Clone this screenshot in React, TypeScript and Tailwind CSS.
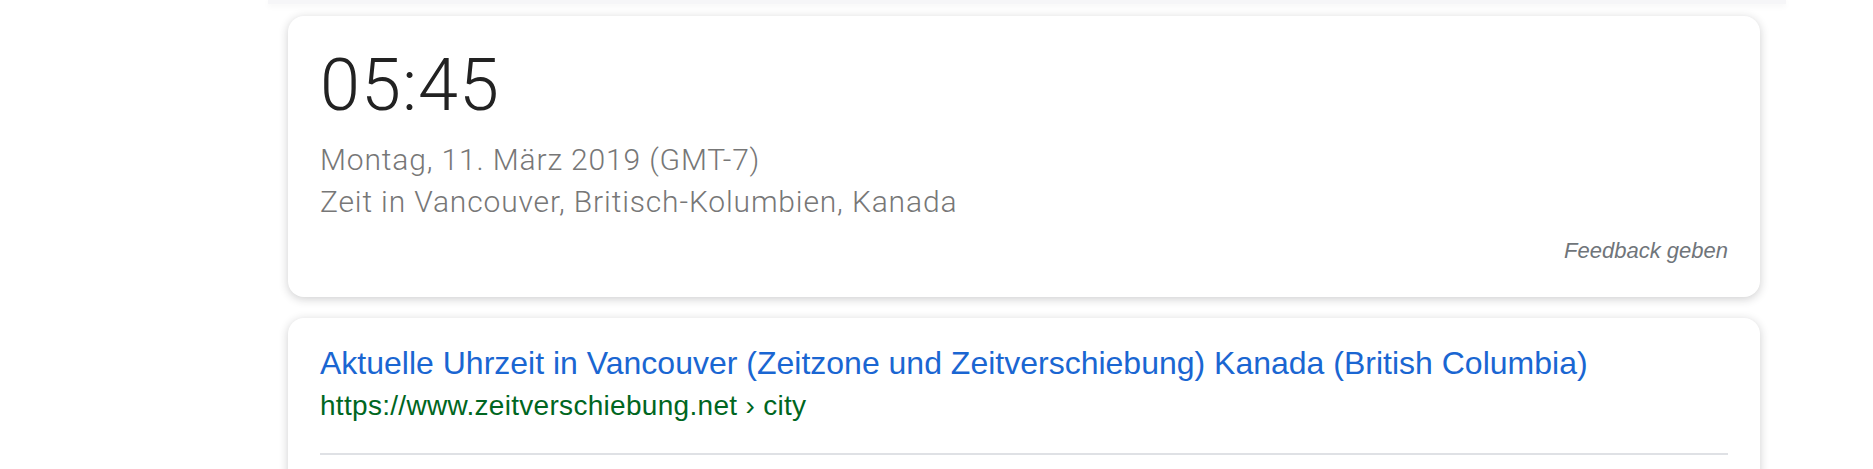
import React from 'react';

const TimeCard: React.FC = () => {
  return (
    <div className="bg-white rounded-2xl shadow-[0_2px_10px_rgba(32,33,36,0.22)] px-8 pt-[30px] pb-[34px]">
      <div className="font-['Roboto',sans-serif] font-light text-[72px] leading-[80px] tracking-[1px] text-[#222222]">
        05:45
      </div>
      <div className="mt-[13px] font-['Roboto',sans-serif] font-light text-[30px] leading-[42px] tracking-[0.85px] text-[#777777]">
        <div>Montag, 11. März 2019 (GMT-7)</div>
        <div>Zeit in Vancouver, Britisch-Kolumbien, Kanada</div>
      </div>
      <div className="mt-[16px] flex justify-end">
        <span className="font-['Liberation_Sans',Arial,sans-serif] italic text-[22px] leading-[24px] text-[#70757a]">
          Feedback geben
        </span>
      </div>
    </div>
  );
};

const ResultCard: React.FC = () => {
  return (
    <div className="bg-white rounded-2xl shadow-[0_2px_10px_rgba(32,33,36,0.22)] px-8 pt-[25px] pb-16 font-['Liberation_Sans',Arial,sans-serif]">
      <a href="#" className="block text-[32px] leading-[40px] text-[#1a66d2]">
        Aktuelle Uhrzeit in Vancouver (Zeitzone und Zeitverschiebung) Kanada (British Columbia)
      </a>
      <div className="mt-[5px] text-[28px] leading-[36px] tracking-[0.3px] text-[#006621]">
        https://www.zeitverschiebung.net › city
      </div>
      <div className="mt-[29px] h-[2px] bg-[#dfe1e5]" />
    </div>
  );
};

const App: React.FC = () => {
  return (
    <div className="min-h-screen w-full bg-white overflow-hidden">
      {/* bottom edge of the bar above */}
      <div className="ml-[268px] w-[1518px] h-[4px] bg-[#f6f6f8] shadow-[0_2px_6px_rgba(0,0,0,0.05)]" />
      <div className="ml-[288px] w-[1472px] mt-[12px] flex flex-col gap-[21px]">
        <TimeCard />
        <ResultCard />
      </div>
    </div>
  );
};

export default App;
